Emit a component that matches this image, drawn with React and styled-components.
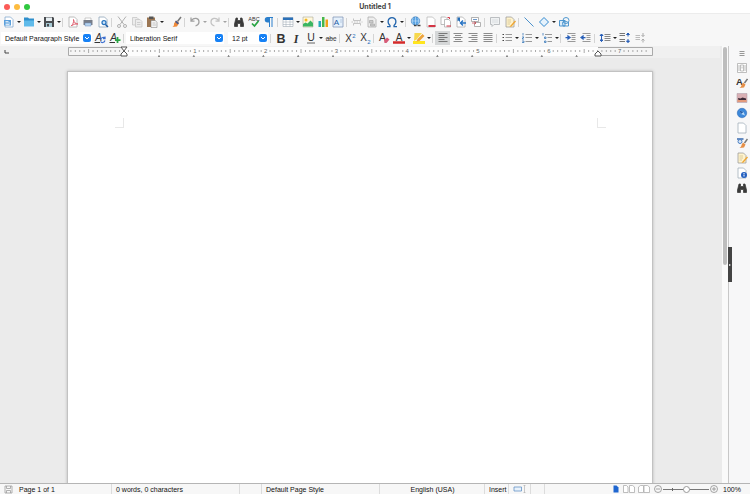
import React, { useState } from 'react';
import styled, { createGlobalStyle } from 'styled-components';

const GlobalStyle = createGlobalStyle`
  * {
    box-sizing: border-box;
  }

  body {
    margin: 0;
    background: #f7f7f7;
    color: #111;
    font-family: "Liberation Sans", Arial, sans-serif;
    font-size: 7px;
  }

  button, select, input {
    margin: 0;
    padding: 0;
    border: 0;
    background: none;
    color: inherit;
    font: inherit;
  }
`;

const Window = styled.div`
  height: 100vh;
  display: flex;
  flex-direction: column;
  overflow: hidden;
`;

const TitleBar = styled.header`
  position: relative;
  flex: none;
  height: 14px;
  display: flex;
  align-items: center;
  justify-content: center;
  background: #fff;
  border-bottom: 1px solid #ececec;

  h1 {
    margin: 0;
    color: #444;
    font: bold 7px "Inter", sans-serif;
  }
`;

const Lights = styled.div`
  position: absolute;
  left: 4px;
  display: flex;
  gap: 4px;
`;

const Light = styled.button`
  width: 6px;
  height: 6px;
  border-radius: 50%;
  background: ${props => props.$color};
`;

const Toolbar = styled.div`
  flex: none;
  height: 16px;
  display: flex;
  align-items: center;
  padding-left: ${props => props.$indent}px;
`;

const ToolButton = styled.button`
  flex: none;
  width: 15px;
  height: 14px;
  display: flex;
  align-items: center;
  justify-content: center;
  background: ${props => (props.$active ? '#d5d7d8' : 'none')};
  opacity: ${props => (props.$faded ? 0.5 : 1)};

  svg {
    display: block;
  }
`;

const DropButton = styled.button`
  flex: none;
  width: 5px;
  height: 14px;
  display: flex;
  align-items: center;
  justify-content: center;
  opacity: ${props => (props.$faded ? 0.4 : 1)};

  &::after {
    content: '';
    border: 2px solid transparent;
    border-top-color: #222;
    border-bottom: 0;
  }
`;

const Separator = styled.span`
  flex: none;
  width: 4px;
  height: 9px;
  border-left: 1px solid ${props => (props.$blank ? 'transparent' : '#d4d4d4')};
  margin-right: -1px;
  margin-left: 1px;
`;

const Combo = styled.label`
  position: relative;
  flex: none;
  width: ${props => props.$width}px;
  height: 12px;
  margin-right: ${props => props.$after}px;
  background: #fff;

  select {
    width: 100%;
    height: 12px;
    padding-left: 4px;
    appearance: none;
    outline: none;
    font-size: 7px;
  }

  svg {
    position: absolute;
    right: 1px;
    top: 2px;
    pointer-events: none;
  }
`;

const Body = styled.div`
  flex: 1;
  min-height: 0;
  display: flex;
`;

const Workspace = styled.main`
  flex: 1;
  min-width: 0;
  display: flex;
  flex-direction: column;
  background: #ebebeb;
`;

const RulerRow = styled.div`
  position: relative;
  flex: none;
  height: 12px;
  display: flex;
  justify-content: center;
  background: #f0f0f0;
`;

const TabButton = styled.button`
  position: absolute;
  left: 4px;
  top: 4px;
  width: 5px;
  height: 5px;

  svg {
    display: block;
  }
`;

const Canvas = styled.div`
  flex: 1;
  min-height: 0;
  display: flex;
  justify-content: center;
  padding-top: 13px;
  overflow: hidden;
`;

const Page = styled.article`
  flex: none;
  width: 586px;
  height: 827px;
  padding: 46px 46px 46px 47px;
  display: flex;
  justify-content: space-between;
  background: #fff;
  border: 1px solid #c2c2c2;
  box-shadow: 0 0 3px #bbb;
`;

const Corner = styled.span`
  width: 9px;
  height: 10px;
  border-bottom: 1px solid #e8e8e8;
  border-${props => props.$side}: 1px solid #e8e8e8;
`;

const ScrollTrack = styled.div`
  flex: none;
  width: 8px;
  padding: 1px 1px 0 3px;
  background: linear-gradient(90deg, #ebebeb 2px, #fafafa 2px);
`;

const ScrollThumb = styled.div`
  width: 4px;
  height: 50%;
  border-radius: 2px;
  background: #bdbdbd;
`;

const Sidebar = styled.aside`
  position: relative;
  flex: none;
  width: 22px;
  padding-left: 5px;
  border-left: 1px solid #c8c8c8;
  background: #f7f7f8;
`;

const Grip = styled.button`
  position: absolute;
  left: -1px;
  top: 46%;
  width: 4px;
  height: 35px;
  display: flex;
  align-items: center;
  justify-content: center;
  background: #444;

  &::after {
    content: '';
    border: 1px solid transparent;
    border-left: 2px solid #fff;
  }
`;

const SideNav = styled.nav`
  display: flex;
  flex-direction: column;
  gap: 1px;
`;

const StatusBar = styled.footer`
  flex: none;
  height: 11px;
  display: flex;
  align-items: center;
  border-top: 1px solid #b5b5b5;
  background: #f7f7f7;
`;

const Cell = styled.div`
  flex: ${props => props.$grow || 0} 0 ${props => props.$width}px;
  height: 10px;
  display: flex;
  align-items: center;
  justify-content: ${props => (props.$center ? 'center' : 'flex-start')};
  gap: ${props => props.$gap || 0}px;
  padding-left: ${props => (props.$center ? 1 : 4)}px;
  border-right: 1px solid ${props => (props.$last ? 'transparent' : '#dcdcdc')};
  white-space: nowrap;
`;

const Views = styled.div`
  display: flex;
  gap: 3px;
  padding-right: 4px;
`;

const StatusButton = styled.button`
  display: flex;

  svg {
    display: block;
  }
`;

const Zoom = styled.div`
  display: flex;
  align-items: center;
  gap: 1px;
  padding-right: 9px;

  output {
    padding-left: 4px;
  }
`;

const ZoomRange = styled.input`
  width: 46px;
  height: 8px;
  appearance: none;
  background:
    linear-gradient(#666, #666) 9px 3px / 1px 3px no-repeat,
    linear-gradient(#777, #777) 0 4px / 100% 1px no-repeat;

  &::-webkit-slider-thumb {
    appearance: none;
    width: 7px;
    height: 7px;
    border: 1px solid #999;
    border-radius: 50%;
    background: #fff;
  }
`;

const Letter = props => (
  <text fontFamily="Liberation Sans, Arial, sans-serif" fill="#333" textAnchor="middle" x="12" {...props} />
);

const docPath = 'M4 2h11l5 5v15H4z';
const brush = (
  <g>
    <path d="M22 2l-7 9" stroke="#777" strokeWidth="3" />
    <path d="M12 9l6 5-4 7-9 1c3-2 3-4 3-7z" fill="#f08a38" />
    <path d="M12 9l6 5-2 3-6-5z" fill="#4b5c8c" />
  </g>
);
const binoculars = (
  <path
    d="M6 4h3v5h6V4h3l3 12v5h-6v-6H9v6H3v-5z"
    fill="#3a3a3a"
    stroke="#3a3a3a"
    strokeWidth="1.5"
  />
);
const rows = (color, list) =>
  list.map(([x, y, w]) => <path key={y} d={`M${x} ${y}h${w}`} stroke={color} strokeWidth="2" />);

const icons = {
  newDoc: (
    <g>
      <path d={docPath} fill="#fff" stroke="#7fa6cc" strokeWidth="1.5" />
      <path d="M2 8h14v11H2z" fill="#5ba0dc" />
      <path d="M5 11h6M5 14h9M5 17h8" stroke="#fff" strokeWidth="1.5" />
    </g>
  ),
  folder: (
    <g>
      <path d="M2 3h8l2 2h10v15H2z" fill="#2f8fcc" />
      <path d="M2 9h20v12H2z" fill="#60bbea" />
    </g>
  ),
  save: (
    <g>
      <path d="M2 2h18l2 2v18H2z" fill="#4a4d50" />
      <path d="M6 3h12v7H6z" fill="#e6eef2" />
      <path d="M6 14h12v8H6z" fill="#a9cbd6" />
      <path d="M8 16h4v5H8z" fill="#4a4d50" />
    </g>
  ),
  pdf: (
    <g>
      <path d={docPath} fill="#fff" stroke="#aaa" strokeWidth="1.5" />
      <path d="M8 20c4-3 6-8 5-13 1 6 4 9 9 9-5-1-9 1-12 3" fill="none" stroke="#df6070" strokeWidth="2" />
    </g>
  ),
  print: (
    <g>
      <path d="M6 4h12v5H6z" fill="#fff" stroke="#999" />
      <path d="M3 8h18v10H3z" fill="#777d88" />
      <path d="M6 14h12v6H6z" fill="#b7d5ef" stroke="#6c8fc0" />
    </g>
  ),
  preview: (
    <g>
      <path d={docPath} fill="#fff" stroke="#8aa0b5" strokeWidth="1.5" />
      <circle cx="14" cy="13" r="4" fill="#cfe5fa" stroke="#2774bf" strokeWidth="2.5" />
      <path d="M17 17l5 5" stroke="#1b59a0" strokeWidth="3" />
    </g>
  ),
  cut: (
    <g fill="none" stroke="#b0b0b0" strokeWidth="2">
      <path d="M4 1l12 16M20 1L8 17" />
      <circle cx="6" cy="20" r="3" />
      <circle cx="18" cy="20" r="3" />
    </g>
  ),
  copy: (
    <g fill="#ececec" stroke="#c4c4c4" strokeWidth="1.5">
      <path d="M3 3h9l3 3v12H3z" />
      <path d="M9 7h9l4 4v11H9z" />
      <path d="M12 13h7M12 17h7" />
    </g>
  ),
  paste: (
    <g>
      <path d="M2 3h16v19H2z" fill="#9b7653" />
      <path d="M6 1h9v5H6z" fill="#555" />
      <path d="M10 9h9l3 4v10H10z" fill="#f4f4f4" stroke="#777" />
      <path d="M13 14h6M13 18h7" stroke="#999" />
    </g>
  ),
  clone: brush,
  undo: <path d="M4 3v7h7M5 9c5-7 15-5 15 3 0 5-4 7-7 8" fill="none" stroke="#a0a0a0" strokeWidth="2.5" />,
  redo: <path d="M20 3v7h-7M19 9C14 2 4 4 4 12c0 5 4 7 7 8" fill="none" stroke="#909090" strokeWidth="2.5" />,
  find: binoculars,
  spell: (
    <g>
      <Letter y="9" fontSize="11">ABC</Letter>
      <path d="M8 15l5 5 8-10" fill="none" stroke="#28a443" strokeWidth="3.5" />
    </g>
  ),
  pilcrow: (
    <g>
      <path d="M11 3h9M13 3v19M18 3v19" stroke="#2b7fcc" strokeWidth="2" />
      <path d="M13 2H9a5 5 0 0 0 0 11h4z" fill="#2b7fcc" />
    </g>
  ),
  table: (
    <g>
      <path d="M2 3h20v18H2z" fill="#fff" stroke="#8f9ba6" />
      <path d="M2 3h20v5H2z" fill="#2b70b8" />
      <path d="M2 12h20M2 17h20M8 8v13M16 8v13" stroke="#9ba7b2" />
    </g>
  ),
  image: (
    <g>
      <path d="M2 2h20v20H2z" fill="#fff8dd" stroke="#9b9b82" />
      <circle cx="8" cy="8" r="3" fill="#f3b722" />
      <path d="M2 21v-5l5-3 4 2 6-6 5 5v7z" fill="#3bb562" />
    </g>
  ),
  chart: (
    <g>
      <path d="M3 10h5v12H3z" fill="#26a9b8" />
      <path d="M10 2h5v20h-5z" fill="#46b749" />
      <path d="M17 7h5v15h-5z" fill="#f0a21c" />
    </g>
  ),
  textbox: (
    <g>
      <path d="M2 2h20v20H2z" fill="#e5f0fb" stroke="#7d94b5" strokeWidth="1.5" />
      <Letter x="9" y="17" fontSize="16" fill="#235ca5">A</Letter>
      <path d="M16 8h4M16 12h4" stroke="#8ba4c4" />
    </g>
  ),
  pageBreak: (
    <g stroke="#b2b2b2" fill="none" strokeWidth="1.5">
      <path d="M5 5v4h14V5M5 19v-4h14v4" />
      <path d="M1 12h22" strokeDasharray="3 2" />
    </g>
  ),
  field: (
    <g stroke="#aaa" fill="#eee" strokeWidth="1.5">
      <path d={docPath} />
      <path d="M7 9h7v5H7zM9 16h8v4H9z" fill="#ccc" />
    </g>
  ),
  omega: (
    <path
      d="M2 21h6v-2C2 14 3 3 12 3s10 11 4 16v2h6"
      fill="none"
      stroke="#2466ad"
      strokeWidth="2.5"
    />
  ),
  link: (
    <g>
      <circle cx="11" cy="10" r="8.5" fill="#5aa3e2" stroke="#2368ad" />
      <path d="M3 10h16M11 2v16M6 4c-2 5-2 8 0 12M16 4c2 5 2 8 0 12" fill="none" stroke="#e1f0ff" />
      <path d="M8 19h5M15 19h6" stroke="#444" strokeWidth="3" />
    </g>
  ),
  footnote: (
    <g>
      <path d={docPath} fill="#fff" stroke="#b5b5b5" strokeWidth="1.5" />
      <path d="M7 20h14" stroke="#d43545" strokeWidth="4" />
    </g>
  ),
  endnote: (
    <g fill="#fff" stroke="#a8a8a8" strokeWidth="1.5">
      <path d="M2 2h9l4 4v11H2z" />
      <path d="M9 7h9l3 4v11H9z" />
      <path d="M13 20h9M15 3h4v3" stroke="#d43545" strokeWidth="2" fill="none" />
    </g>
  ),
  bookmark: (
    <g>
      <path d={docPath} fill="#fff" stroke="#a8a8a8" strokeWidth="1.5" />
      <path d="M5 3h5v9l-3-3-2 2z" fill="#266eb7" />
      <path d="M22 14H12m4-5l-5 5 5 5" fill="none" stroke="#2974c3" strokeWidth="3" />
    </g>
  ),
  crossRef: (
    <g fill="#fff" stroke="#999" strokeWidth="1.5">
      <path d="M3 3h14v8H3zM9 13h12v8H9z" />
      <path d="M6 7h8" stroke="#3e77b8" />
      <path d="M4 14h8m-3-3l3 3-3 3" stroke="#c9404b" fill="none" />
    </g>
  ),
  comment: (
    <g>
      <path d="M3 3h18v14H10l-4 4v-4H3z" fill="#f0f2f3" stroke="#a9adb0" strokeWidth="1.5" />
      <path d="M6 8h12M6 12h12" stroke="#c5c9cc" />
    </g>
  ),
  track: (
    <g>
      <path d={docPath} fill="#fff3cc" stroke="#999" strokeWidth="1.5" />
      <path d="M7 8h7M7 12h7M7 16h5" stroke="#b5a36d" />
      <path d="M22 9l-9 10-2 3 4-1 9-10z" fill="#efa633" />
    </g>
  ),
  line: <path d="M3 3l18 18" stroke="#4b91cc" strokeWidth="2" />,
  diamond: <path d="M12 3l9 9-9 9-9-9z" fill="#e5f2fc" stroke="#3289cf" strokeWidth="2" />,
  shapes: (
    <g fill="#dcecf9" stroke="#408fcc" strokeWidth="1.8">
      <path d="M3 9h11v11H3z" />
      <circle cx="16" cy="9" r="6" fill="none" />
      <path d="M9 13l5-3 7 3v7H10z" fill="none" />
    </g>
  ),
  updateStyle: (
    <g>
      <Letter x="9" y="17" fontSize="20" fontStyle="italic">A</Letter>
      <path d="M1 21h11" stroke="#333" strokeWidth="2" />
      <path d="M13 15c2-5 7-5 9-2M22 17c-2 5-7 5-9 2M22 9v4h-4" fill="none" stroke="#3b6fd0" strokeWidth="2.5" />
    </g>
  ),
  newStyle: (
    <g>
      <Letter x="9" y="17" fontSize="20" fontStyle="italic">A</Letter>
      <path d="M1 21h11" stroke="#333" strokeWidth="2" />
      <path d="M12 16h11M17 10v12" stroke="#2aa344" strokeWidth="3.5" />
    </g>
  ),
  bold: <Letter y="21" fontSize="25" fontWeight="bold">B</Letter>,
  italic: <Letter y="21" fontSize="24" fontStyle="italic" fontWeight="bold" fontFamily="Liberation Serif, serif">I</Letter>,
  underline: (
    <g>
      <Letter y="18" fontSize="21">U</Letter>
      <path d="M4 22h16" stroke="#333" strokeWidth="1.5" />
    </g>
  ),
  strike: (
    <g>
      <Letter y="17" fontSize="13">abc</Letter>
      <path d="M1 13h22" stroke="#555" />
    </g>
  ),
  superscript: (
    <g>
      <Letter x="9" y="20" fontSize="20">X</Letter>
      <Letter x="20" y="11" fontSize="12" fill="#2a70bb">2</Letter>
    </g>
  ),
  subscript: (
    <g>
      <Letter x="9" y="18" fontSize="20">X</Letter>
      <Letter x="20" y="23" fontSize="12" fill="#2a70bb">2</Letter>
    </g>
  ),
  clear: (
    <g>
      <Letter x="9" y="18" fontSize="21">A</Letter>
      <path d="M12 17l6-6 5 4-6 7h-4z" fill="#d65b78" />
    </g>
  ),
  fontColor: (
    <g>
      <Letter y="17" fontSize="20">A</Letter>
      <path d="M0 21h24" stroke="#d42a2a" strokeWidth="5" />
    </g>
  ),
  highlight: (
    <g>
      <path d="M0 18h24v6H0z" fill="#ffe51e" />
      <path d="M3 2h15L7 15l-5 3z" fill="#f7d84c" />
      <path d="M19 4l4 4-10 10-6 1 2-5z" fill="#eda33c" />
    </g>
  ),
  alignLeft: rows('#777', [[3, 3, 18], [3, 7, 12], [3, 11, 18], [3, 15, 12], [3, 19, 18]]),
  alignCenter: rows('#8b8b8b', [[3, 3, 18], [6, 7, 12], [3, 11, 18], [6, 15, 12], [3, 19, 18]]),
  alignRight: rows('#8b8b8b', [[3, 3, 18], [9, 7, 12], [3, 11, 18], [9, 15, 12], [3, 19, 18]]),
  justify: rows('#8b8b8b', [[3, 3, 18], [3, 7, 18], [3, 11, 18], [3, 15, 18], [3, 19, 18]]),
  bullets: (
    <g>
      {rows('#999', [[9, 5, 13], [9, 11, 13], [9, 17, 13]])}
      {rows('#444', [[3, 5, 3], [3, 11, 3], [3, 17, 3]])}
    </g>
  ),
  numbers: (
    <g>
      {rows('#999', [[9, 5, 13], [9, 11, 13], [9, 19, 13]])}
      <path d="M4 2v5M2 10h4l-4 4h4M2 18h4v3H2" fill="none" stroke="#2d71b5" strokeWidth="1.5" />
    </g>
  ),
  outline: (
    <g>
      {rows('#999', [[8, 5, 14], [13, 11, 9], [13, 19, 9]])}
      <path d="M4 2v5M7 10h3v3H7zM7 18h3v3H7z" fill="none" stroke="#2d71b5" strokeWidth="1.5" />
    </g>
  ),
  indent: (
    <g>
      {rows('#999', [[5, 3, 16], [13, 7, 8], [13, 11, 8], [13, 15, 8], [5, 19, 16]])}
      <path d="M1 11h6M6 8l4 3-4 3z" fill="#285fb8" stroke="#285fb8" strokeWidth="2.5" />
    </g>
  ),
  outdent: (
    <g>
      {rows('#999', [[5, 3, 16], [13, 7, 8], [13, 11, 8], [13, 15, 8], [5, 19, 16]])}
      <path d="M11 11H5M6 8l-4 3 4 3z" fill="#285fb8" stroke="#285fb8" strokeWidth="2.5" />
    </g>
  ),
  spacing: (
    <g>
      {rows('#888', [[11, 5, 12], [11, 9, 12], [11, 13, 12], [11, 17, 12]])}
      <path d="M5 4v15M2 7l3-3 3 3zM2 16l3 3 3-3z" fill="#285fb8" stroke="#285fb8" strokeWidth="2" />
    </g>
  ),
  spaceMore: (
    <g>
      {rows('#777', [[1, 3, 11], [1, 7, 11], [1, 15, 11], [1, 19, 11]])}
      <path d="M18 2v7M15 5l3-3 3 3zM18 14v7M15 18l3 3 3-3z" fill="#285fb8" stroke="#285fb8" strokeWidth="2" />
    </g>
  ),
  spaceLess: (
    <g>
      {rows('#bbb', [[3, 7, 9], [3, 11, 9], [3, 15, 9]])}
      <path d="M18 2v7M15 6l3 3 3-3M18 21v-7M15 17l3-3 3 3" fill="none" stroke="#aaa" strokeWidth="2" />
    </g>
  ),
  menu: <path d="M7 9h10M7 13h10M7 17h10" stroke="#777" strokeWidth="1.5" />,
  properties: (
    <g fill="#fff" stroke="#aaa" strokeWidth="1.5">
      <path d="M3 3h18v18H3z" />
      <path d="M9 6h6v12H9zM12 9v4M6 6v12M18 6v12" />
    </g>
  ),
  styles: (
    <g>
      <Letter x="7" y="16" fontSize="19" fontWeight="bold">A</Letter>
      <path d="M23 4l-6 8" stroke="#777" strokeWidth="3" />
      <path d="M14 11l5 4-3 6-9 1c3-2 4-4 4-6z" fill="#e58f48" />
    </g>
  ),
  gallery: (
    <g>
      <path d="M2 3h20v18H2z" fill="#d9b0b5" stroke="#a899a6" />
      <path d="M3 15h18v5H3z" fill="#e39a7b" />
      <path d="M4 12l5 1 4-2 7 2v3H5z" fill="#3c2b38" />
    </g>
  ),
  navigator: (
    <g>
      <circle cx="12" cy="12" r="9.5" fill="#3c88da" stroke="#2461ae" />
      <path d="M7 7l8 3 3 7-8-3z" fill="#b7dafa" />
      <path d="M15 10l-5 4-3-7z" fill="#235ba8" />
    </g>
  ),
  page: <path d={docPath} fill="#fff" stroke="#9eabb7" strokeWidth="1.5" />,
  inspector: (
    <g>
      <path d="M23 4l-6 8" stroke="#777" strokeWidth="3" />
      <path d="M14 11l5 4-3 6-9 1c3-2 4-4 4-6z" fill="#e58f48" />
      <path d="M2 4h13" stroke="#386ab0" strokeWidth="3" />
      <circle cx="8" cy="9" r="4" fill="#dbe8f6" stroke="#4b7fc2" strokeWidth="2" />
    </g>
  ),
  info: (
    <g>
      <path d={docPath} fill="#fff" stroke="#9eabb7" strokeWidth="1.5" />
      <circle cx="16" cy="16" r="6" fill="#225fc0" />
      <path d="M16 12v2M16 15v4" stroke="#fff" strokeWidth="2" />
    </g>
  )
};

const Icon = ({ name }) => (
  <svg width="12" height="12" viewBox="0 0 24 24" fill="none" aria-hidden="true">
    {icons[name]}
  </svg>
);

// '|' draws a separator, '_' leaves a blank gap and a trailing 'v' adds a drop-down arrow
const standardTools = [
  'newDoc v', 'folder v', 'save v', '|', 'pdf', 'print', 'preview', '|', 'cut', 'copy', 'paste v', '_',
  'clone', '|', 'undo v', 'redo v', '|', 'find', 'spell', 'pilcrow', '|', 'table v', 'image', 'chart',
  'textbox', '|', 'pageBreak', 'field v', 'omega v', '|', 'link', 'footnote', 'endnote', 'bookmark',
  'crossRef', '|', 'comment', 'track', '|', 'line', 'diamond v', 'shapes'
];

const formatTools = [
  '|', 'bold', 'italic', 'underline v', 'strike', '|', 'superscript', 'subscript', '|', 'clear',
  'fontColor v', 'highlight v', '|', 'alignLeft', 'alignCenter', 'alignRight', 'justify', '|',
  'bullets v', 'numbers v', 'outline v', '|', 'indent', 'outdent', '|', 'spacing v', 'spaceMore', 'spaceLess'
];

const sideTools = [
  'menu', 'properties', 'styles', 'gallery', 'navigator', 'page', 'inspector', 'track', 'info', 'find'
];

const Tools = ({ items, active }) =>
  items.map((item, i) => {
    if (item === '|' || item === '_') {
      return <Separator key={i} $blank={item === '_'} />;
    }
    const [name, drop] = item.split(' ');
    const faded = name === 'undo' || name === 'redo';
    return (
      <React.Fragment key={i}>
        <ToolButton aria-label={name} $active={name === active} $faded={name === 'redo'}>
          <Icon name={name} />
        </ToolButton>
        {drop && <DropButton aria-label={`${name} options`} $faded={faded} />}
      </React.Fragment>
    );
  });

const ComboBox = ({ label, options, width, after }) => (
  <Combo $width={width} $after={after}>
    <select aria-label={label}>
      {options.map(option => (
        <option key={option}>{option}</option>
      ))}
    </select>
    <svg width="8" height="8" viewBox="0 0 16 16" aria-hidden="true">
      <rect width="16" height="16" rx="4" fill="#1681f5" />
      <path d="M4 6l4 4 4-4" fill="none" stroke="#fff" strokeWidth="2" />
    </svg>
  </Combo>
);

const INCH = 70.8;
const LEFT = 57;
const RIGHT = 531;

const Ruler = () => {
  const ticks = [];
  for (let i = -12; i < 119; i++) {
    const x = LEFT + (i * INCH) / 16;
    if (i % 16 === 0) continue;
    const size = i % 8 === 0 ? 2 : 1;
    ticks.push(<path key={i} d={`M${x} ${5 - size}v${size * 2}`} stroke="#aaa" />);
  }
  const stops = [];
  for (let x = LEFT + 35; x < RIGHT; x += 34.8) {
    stops.push(<path key={x} d={`M${x} 9v2M${x - 1} 10.500h2`} stroke="#888" />);
  }

  return (
    <svg width="586" height="12" viewBox="0 0 586 12" fill="none">
      <path d="M1.500 1.500h584v8h-584z" fill="#f5f5f5" stroke="#aaa" />
      <path d={`M${LEFT} 1h${RIGHT - LEFT}v9h-${RIGHT - LEFT}z`} fill="#fdfdfd" />
      {ticks}
      {stops}
      {[1, 2, 3, 4, 5, 6, 7].map(n => (
        <text key={n} x={LEFT + n * INCH} y="7" fontSize="6" fill="#666" textAnchor="middle">
          {n}
        </text>
      ))}
      <path d={`M${LEFT - 3} 1h6l-3 4zM${LEFT} 5l3 3v2h-6V8z`} fill="#fff" stroke="#555" />
      <path d={`M${RIGHT} 5l3 3v2h-6V8z`} fill="#fff" stroke="#555" />
    </svg>
  );
};

const App = () => {
  const [zoom, setZoom] = useState(100);

  return (
    <Window>
      <GlobalStyle />
      <TitleBar>
        <Lights>
          <Light $color="#fc5b57" aria-label="Close" />
          <Light $color="#fdbc40" aria-label="Minimize" />
          <Light $color="#2fc840" aria-label="Full screen" />
        </Lights>
        <h1>Untitled 1</h1>
      </TitleBar>

      <Toolbar $indent={1}>
        <Tools items={standardTools} />
      </Toolbar>
      <Toolbar $indent={1}>
        <ComboBox label="Paragraph style" options={['Default Paragraph Style']} width={91} after={0} />
        <Tools items={['updateStyle', 'newStyle', '|']} />
        <ComboBox label="Font name" options={['Liberation Serif']} width={98} after={4} />
        <ComboBox label="Font size" options={['12 pt']} width={40} after={1} />
        <Tools items={formatTools} active="alignLeft" />
      </Toolbar>

      <Body>
        <Workspace>
          <RulerRow>
            <TabButton aria-label="Tab type">
              <svg width="5" height="5" viewBox="0 0 5 5">
                <path d="M1 0v3h4" fill="none" stroke="#444" />
              </svg>
            </TabButton>
            <Ruler />
          </RulerRow>
          <Canvas>
            <Page>
              <Corner $side="right" />
              <Corner $side="left" />
            </Page>
          </Canvas>
        </Workspace>
        <ScrollTrack>
          <ScrollThumb />
        </ScrollTrack>
        <Sidebar>
          <SideNav>
            <Tools items={sideTools} />
          </SideNav>
          <Grip aria-label="Hide sidebar" />
        </Sidebar>
      </Body>

      <StatusBar>
        <Cell $width={112} $gap={6}>
          <StatusButton aria-label="Save">
            <svg width="9" height="9" viewBox="0 0 18 18" fill="none" stroke="#999" strokeWidth="1.5">
              <path d="M2 2h14v14H2zM5 2v5h8V2M5 16v-5h8v5" />
            </svg>
          </StatusButton>
          Page 1 of 1
        </Cell>
        <Cell $width={128}>0 words, 0 characters</Cell>
        <Cell $width={22} />
        <Cell $width={118}>Default Page Style</Cell>
        <Cell $width={105} $center>English (USA)</Cell>
        <Cell $width={24}>Insert</Cell>
        <Cell $width={22}>
          <StatusButton aria-label="Selection mode">
            <svg width="14" height="8" viewBox="0 0 28 16" fill="none">
              <path d="M2 4h15v8H2z" fill="#e9f2fb" stroke="#5d8fc4" strokeWidth="1.5" />
              <path d="M23 1v14M21 1h4M21 15h4" stroke="#999" />
            </svg>
          </StatusButton>
        </Cell>
        <Cell $width={14} />
        <Cell $width={60} $grow={1} $last />
        <Views>
          <StatusButton aria-label="Single page">
            <svg width="8" height="8" viewBox="0 0 16 16">
              <path d="M3 1h6l4 4v10H3z" fill="#1f66d0" />
            </svg>
          </StatusButton>
          <StatusButton aria-label="Multiple pages">
            <svg width="12" height="8" viewBox="0 0 24 16" fill="#fff" stroke="#aaa" strokeWidth="1.5">
              <path d="M1 1h6l3 3v11H1zM13 1h6l4 3v11H13z" />
            </svg>
          </StatusButton>
          <StatusButton aria-label="Book view">
            <svg width="12" height="8" viewBox="0 0 24 16" fill="#fff" stroke="#aaa" strokeWidth="1.5">
              <path d="M11 1H5L1 4v11h10zM12 1h7l4 3v11H12z" />
            </svg>
          </StatusButton>
        </Views>
        <Zoom>
          <StatusButton aria-label="Zoom out" onClick={() => setZoom(zoom - 10)}>
            <svg width="8" height="8" viewBox="0 0 16 16" fill="none" stroke="#888" strokeWidth="1.5">
              <circle cx="8" cy="8" r="7" />
              <path d="M4 8h8" />
            </svg>
          </StatusButton>
          <ZoomRange
            type="range"
            aria-label="Zoom"
            min="0"
            max="200"
            value={zoom}
            onChange={e => setZoom(Number(e.target.value))}
          />
          <StatusButton aria-label="Zoom in" onClick={() => setZoom(zoom + 10)}>
            <svg width="8" height="8" viewBox="0 0 16 16" fill="none" stroke="#888" strokeWidth="1.5">
              <circle cx="8" cy="8" r="7" />
              <path d="M4 8h8M8 4v8" />
            </svg>
          </StatusButton>
          <output>{zoom}%</output>
        </Zoom>
      </StatusBar>
    </Window>
  );
};

export default App;
